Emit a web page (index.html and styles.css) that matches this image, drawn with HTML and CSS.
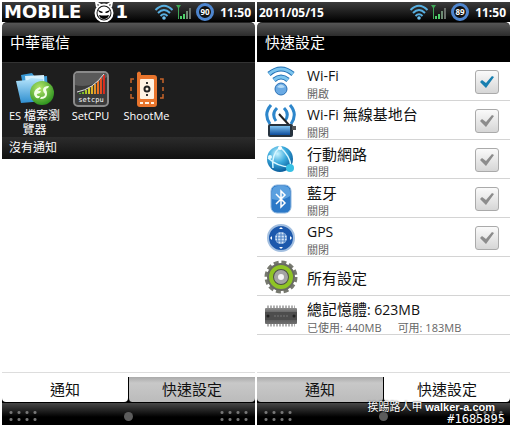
FILE: index.html
```
<!DOCTYPE html>
<html lang="zh-Hant">
<head>
    <meta charset="UTF-8">
    <meta name="viewport" content="width=device-width, initial-scale=1.0">
    <title>快速設定</title>
    <link rel="stylesheet" href="styles.css">
</head>
<body>
    <!-- Shared icons -->
    <svg class="defs" width="0" height="0" aria-hidden="true">
        <defs>
            <linearGradient id="blue" x1="0" y1="0" x2="0" y2="1">
                <stop offset="0" stop-color="#7fc3f0"/>
                <stop offset="1" stop-color="#0c4c9c"/>
            </linearGradient>
            <linearGradient id="folder" x1="0" y1="0" x2="0" y2="1">
                <stop offset="0" stop-color="#b5e4fb"/>
                <stop offset="1" stop-color="#2f8fd0"/>
            </linearGradient>
            <linearGradient id="bars" x1="0" y1="0" x2="1" y2="0">
                <stop offset="0" stop-color="#43b02a"/>
                <stop offset="0.4" stop-color="#d8d02a"/>
                <stop offset="0.75" stop-color="#ee6a22"/>
                <stop offset="1" stop-color="#d32020"/>
            </linearGradient>
            <linearGradient id="metal" x1="0" y1="0" x2="0" y2="1">
                <stop offset="0" stop-color="#8c8c8c"/>
                <stop offset="0.5" stop-color="#4a4a4a"/>
                <stop offset="1" stop-color="#707070"/>
            </linearGradient>
            <radialGradient id="ball" cx="0.4" cy="0.3" r="0.7">
                <stop offset="0" stop-color="#c9f4ff"/>
                <stop offset="0.5" stop-color="#39a9dc"/>
                <stop offset="1" stop-color="#0a5d9c"/>
            </radialGradient>
            <radialGradient id="leaf" cx="0.4" cy="0.3" r="0.7">
                <stop offset="0" stop-color="#b7e86c"/>
                <stop offset="1" stop-color="#2f9420"/>
            </radialGradient>
            <symbol id="wifi" viewBox="0 0 20 16">
                <g fill="none" stroke="#58b0e2" stroke-width="2">
                    <path d="M1.500 6Q10-2.500 18.500 6"/>
                    <path d="M4 9Q10 3 16 9"/>
                    <path d="M6.500 12Q10 8.500 13.500 12"/>
                </g>
                <circle cx="10" cy="14" r="1.800" fill="#6fc0ee"/>
            </symbol>
            <symbol id="signal" viewBox="0 0 16 16">
                <path d="M0 1h5L3 4v11H2V4z" fill="#3fa957"/>
                <path d="M4 12h2v3H4zM7 10h2v5H7z" fill="#4fd06a"/>
                <path d="M10 7h2v8h-2z" fill="#6d8a72"/>
                <path d="M13 4h2v11h-2z" fill="#6a706b"/>
            </symbol>
            <symbol id="check" viewBox="0 0 24 24">
                <path d="M5 12l2-2 4 3 6-7 2 1-8 11z"/>
            </symbol>
        </defs>
    </svg>

    <main class="screens">
        <section class="phone">
            <header class="status">
                <div class="logo">
                    <span>MOBILE</span>
                    <svg width="22" height="22" viewBox="0 0 22 22" aria-hidden="true">
                        <path d="M4 6L3 1l5 3M14 4l5-3-1 5" fill="#111" stroke="#fff" stroke-width="2"/>
                        <circle cx="11" cy="12" r="8.500" fill="#111" stroke="#fff" stroke-width="2"/>
                        <circle cx="11" cy="12" r="6.500" fill="#fff"/>
                        <path d="M5 9l5 2-1 1q-3 0-4-3zM17 9l-5 2 1 1q3 0 4-3zM6 14q5 1 10 0-1 4-5 4t-5-4z" fill="#000"/>
                    </svg>
                    <span>1</span>
                </div>
                <svg class="wifi" aria-hidden="true"><use href="#wifi"/></svg>
                <svg class="signal" aria-hidden="true"><use href="#signal"/></svg>
                <span class="battery">90</span>
                <time>11:50</time>
            </header>
            <h1>中華電信</h1>
            <div class="apps">
                <button class="app" type="button">
                    <svg width="40" height="36" viewBox="0 0 40 36" aria-hidden="true">
                        <path d="M6 4l11-2 3 4 12-1 1 22-22 4z" fill="#3a9ad6"/>
                        <path d="M10 5l19-1 1 18-18 3z" fill="#d6f0fc"/>
                        <path d="M1 10l12-1 3-2 12 1 2 22-24 2z" fill="url(#folder)"/>
                        <circle cx="27" cy="22" r="12" fill="url(#leaf)"/>
                        <path d="M25 16q-6 2-6 7 1 5 5 4l1-2q-4 0-3-2l3-1 1-2-3 0q1-2 3-2zM34 15q-6 0-6 4 0 2 2 4 0 3-4 3l-1 2q7 0 7-5 0-3-1-4 0-2 2-2z" fill="#f2ffe6"/>
                    </svg>
                    <span>ES <b>檔案瀏覽器</b></span>
                </button>
                <button class="app" type="button">
                    <svg width="36" height="36" viewBox="0 0 36 36" aria-hidden="true">
                        <rect x="1" y="1" width="34" height="34" rx="4" fill="#3b3b3b" stroke="#8a8a8a" stroke-width="2"/>
                        <path d="M2 14q14 4 32-8v-2l-3-2H4l-2 2z" fill="#5a5a5a"/>
                        <path d="M6 23v-1h2v1zM9 23v-2h2v2zM12 23v-4h2v4zM15 23v-6h2v6zM18 23v-8h2v8zM21 23V13h2v10zM24 23V10h2v13zM27 23V7h2v16zM30 23V4h2v19z" fill="url(#bars)"/>
                        <path d="M4 21Q20 18 31 3" fill="none" stroke="#ddd"/>
                        <text x="18" y="31" text-anchor="middle" font-family="DejaVu Sans Mono" font-size="7" fill="#fff">setcpu</text>
                    </svg>
                    <span>SetCPU</span>
                </button>
                <button class="app" type="button">
                    <svg width="36" height="36" viewBox="0 0 36 36" aria-hidden="true">
                        <path d="M8 2q2-3 4 0v2h13q3 0 3 3v26q0 3-3 3H11q-3 0-3-3z" fill="#e8742c"/>
                        <rect x="11" y="8" width="14" height="20" rx="1" fill="#fff3e4"/>
                        <circle cx="18" cy="18" r="2.500" fill="none" stroke="#222" stroke-width="2"/>
                        <path d="M18 11v2M18 23v2" stroke="#333" stroke-width="2"/>
                        <path d="M11 31h3v2h-3zM16 31h4v2h-4zM22 31h3v2h-3z" fill="#fff3e4"/>
                        <path d="M5 8H2v4M2 16v4M2 23v4h3M31 8h3v4M34 16v4M34 23v4h-3" fill="none" stroke="#c8642a" stroke-width="1.500"/>
                    </svg>
                    <span>ShootMe</span>
                </button>
            </div>
            <p class="no-notice">沒有通知</p>
            <div class="content"></div>
            <nav class="tabs">
                <button class="tab active" type="button">通知</button>
                <button class="tab" type="button">快速設定</button>
            </nav>
            <footer class="handle">
                <i class="dots"></i>
                <i class="knob"></i>
                <i class="dots"></i>
            </footer>
        </section>

        <section class="phone">
            <header class="status">
                <time class="date">2011/05/15</time>
                <svg class="wifi" aria-hidden="true"><use href="#wifi"/></svg>
                <svg class="signal" aria-hidden="true"><use href="#signal"/></svg>
                <span class="battery">89</span>
                <time>11:50</time>
            </header>
            <h1>快速設定</h1>
            <div class="content">
                <label class="row">
                    <svg width="32" height="32" viewBox="0 0 32 32" aria-hidden="true">
                        <g fill="none" stroke="#1f6fb4" stroke-width="5">
                            <path d="M4 8Q16-2 28 8"/>
                            <path d="M9 14q7-6 14 0"/>
                        </g>
                        <g fill="none" stroke="#7cc4ee" stroke-width="3">
                            <path d="M4 8Q16-2 28 8"/>
                            <path d="M9 14q7-6 14 0"/>
                        </g>
                        <circle cx="16" cy="23" r="6" fill="#6aaae4" stroke="#2a70b5"/>
                        <path d="M12 21q4-5 8 0-4 2-8 0z" fill="#b4daf6"/>
                    </svg>
                    <span class="text">
                        <span class="name"><span class="latin">Wi-Fi</span></span>
                        <small>開啟</small>
                    </span>
                    <span class="check">
                        <input type="checkbox" checked>
                        <svg aria-hidden="true"><use href="#check"/></svg>
                    </span>
                </label>
                <label class="row">
                    <svg width="32" height="34" viewBox="0 0 32 34" aria-hidden="true">
                        <g fill="none" stroke="#2d86cb" stroke-width="3">
                            <path d="M6 1Q-2 10 5 20M12 4Q6 10 11 17M25 1q8 9 1 19M19 4q6 6 1 13"/>
                        </g>
                        <path d="M14 10l10 11" stroke="#222" stroke-width="2"/>
                        <rect x="3" y="20" width="25" height="13" rx="2" fill="#26333f"/>
                        <rect x="5" y="22" width="20" height="9" fill="url(#blue)"/>
                        <path d="M27 22h4v4h-4z" fill="#555"/>
                    </svg>
                    <span class="text">
                        <span class="name"><span class="latin">Wi-Fi</span> 無線基地台</span>
                        <small>關閉</small>
                    </span>
                    <span class="check">
                        <input type="checkbox">
                        <svg aria-hidden="true"><use href="#check"/></svg>
                    </span>
                </label>
                <label class="row">
                    <svg width="32" height="32" viewBox="0 0 32 32" aria-hidden="true">
                        <circle cx="15" cy="15" r="13" fill="url(#ball)"/>
                        <path d="M3 14q10 9 22 9M15 3q-9 8-7 21M15 3q10 9 11 19" fill="none" stroke="#d8f6ff" stroke-width="1.500"/>
                        <circle cx="15" cy="4" r="2" fill="#fff"/>
                        <circle cx="5" cy="13" r="2" fill="#e8fbff"/>
                        <circle cx="25" cy="24" r="4" fill="#37c0e4"/>
                    </svg>
                    <span class="text">
                        <span class="name">行動網路</span>
                        <small>關閉</small>
                    </span>
                    <span class="check">
                        <input type="checkbox">
                        <svg aria-hidden="true"><use href="#check"/></svg>
                    </span>
                </label>
                <label class="row">
                    <svg width="32" height="32" viewBox="0 0 32 32" aria-hidden="true">
                        <rect x="6" y="2" width="20" height="28" rx="6" fill="#2c79c8" stroke="#8cb6df"/>
                        <path d="M7 9q0-6 6-6h6q6 0 6 6v4q-9 6-18 3z" fill="#5ba0df"/>
                        <path d="M11 11l9 9-4 4V8l4 4-9 9" fill="none" stroke="#fff" stroke-width="1.500"/>
                    </svg>
                    <span class="text">
                        <span class="name">藍牙</span>
                        <small>關閉</small>
                    </span>
                    <span class="check">
                        <input type="checkbox">
                        <svg aria-hidden="true"><use href="#check"/></svg>
                    </span>
                </label>
                <label class="row">
                    <svg width="32" height="32" viewBox="0 0 32 32" aria-hidden="true">
                        <circle cx="16" cy="16" r="13" fill="#1c58ac" stroke="#a3bfe0" stroke-width="2"/>
                        <circle cx="16" cy="16" r="6" fill="#d4e5f7"/>
                        <path d="M10 16h12M16 10v12M11 13h10M11 19h10M13 11q-1 5 0 10M19 11q1 5 0 10" fill="none" stroke="#4a80c5"/>
                        <path d="M16 5l2 2h-4zM16 27l2-2h-4zM5 16l2-2v4zM27 16l-2-2v4z" fill="#fff"/>
                    </svg>
                    <span class="text">
                        <span class="name"><span class="latin">GPS</span></span>
                        <small>關閉</small>
                    </span>
                    <span class="check">
                        <input type="checkbox">
                        <svg aria-hidden="true"><use href="#check"/></svg>
                    </span>
                </label>
                <button class="row" type="button">
                    <svg width="34" height="34" viewBox="0 0 34 34" aria-hidden="true">
                        <circle cx="17" cy="17" r="15" fill="none" stroke="#77796f" stroke-width="3" stroke-dasharray="5 2.850"/>
                        <circle cx="17" cy="17" r="14" fill="#686a62"/>
                        <circle cx="17" cy="17" r="10" fill="#4c4f48" stroke="#8fc425" stroke-width="4"/>
                        <circle cx="17" cy="17" r="5" fill="#f6f6f6" stroke="#a4a4a4" stroke-width="4"/>
                    </svg>
                    <span class="text">
                        <span class="name">所有設定</span>
                    </span>
                </button>
                <div class="row">
                    <svg width="34" height="24" viewBox="0 0 34 24" aria-hidden="true">
                        <path d="M3 3h28M3 21h28" stroke="#b0b0b0" stroke-width="3" stroke-dasharray="2 1"/>
                        <rect x="1" y="4" width="32" height="16" rx="1" fill="url(#metal)"/>
                        <path d="M1 8h32v8H1z" fill="#4d4d4d"/>
                        <circle cx="4" cy="12" r="1.500" fill="#222"/>
                        <circle cx="30" cy="12" r="1.500" fill="#222"/>
                        <path d="M10 12h14" stroke="#777" stroke-dasharray="2 1"/>
                    </svg>
                    <span class="text">
                        <span class="name">總記憶體<span class="latin">: 623MB</span></span>
                        <small><span>已使用: 440MB</span><span>可用: 183MB</span></small>
                    </span>
                </div>
            </div>
            <nav class="tabs">
                <button class="tab" type="button">通知</button>
                <button class="tab active" type="button">快速設定</button>
            </nav>
            <footer class="handle">
                <i class="dots"></i>
                <i class="knob"></i>
                <i class="dots"></i>
            </footer>
            <div class="watermark">
                <p>挨踢路人甲 <b>walker-a.com</b></p>
                <p class="number">#1685895</p>
            </div>
        </section>
    </main>
</body>
</html>
```
FILE: styles.css
```
* {
    margin: 0;
    padding: 0;
    box-sizing: border-box;
}

body {
    font-family: 'Open Sans', 'Noto Sans CJK TC', sans-serif;
    background: #fff;
    color: #111;
}

button {
    font: inherit;
    color: inherit;
    background: none;
    border: none;
    cursor: pointer;
}

.defs {
    position: absolute;
}

.screens {
    display: flex;
    gap: 2px;
    padding: 2px;
    min-height: 100vh;
}

.phone {
    position: relative;
    flex: 1;
    min-width: 0;
    display: flex;
    flex-direction: column;
}

/* Status bar */
.status {
    display: flex;
    align-items: center;
    height: 20px;
    padding: 0 4px 0 2px;
    background: linear-gradient(#3c3c3c, #000);
    color: #fff;
    font-size: 12px;
    font-weight: bold;
}

.logo,
.date {
    margin-right: auto;
}

.logo {
    display: flex;
    align-items: center;
    font-family: 'DejaVu Sans', sans-serif;
    font-size: 18px;
    line-height: 20px;
}

.logo svg {
    margin-left: 12px;
}

.wifi {
    width: 20px;
    height: 16px;
    margin-right: 2px;
}

.signal {
    width: 16px;
    height: 16px;
    margin-right: 4px;
}

.battery {
    width: 18px;
    height: 18px;
    margin-right: 6px;
    border: 3px solid #4e86cf;
    border-radius: 50%;
    background: #111;
    font-size: 8px;
    line-height: 12px;
    text-align: center;
}

h1 {
    height: 40px;
    padding: 4px 8px 0;
    border-top: 1px solid #222;
    border-radius: 5px 5px 0 0;
    background: linear-gradient(#555, #2c2c2c 13px, #000 13px);
    color: #fff;
    font-size: 15px;
    font-weight: normal;
    line-height: 30px;
}

/* Running apps */
.apps {
    display: flex;
    gap: 3px;
    padding: 8px 6px 0;
    height: 75px;
    background: #1e1e1e;
    border-top: 1px solid #333;
}

.app {
    width: 53px;
    display: flex;
    flex-direction: column;
    align-items: center;
    gap: 2px;
    color: #fff;
    font-size: 11px;
    line-height: 14px;
}

.app svg {
    flex: none;
}

.app b {
    font-size: 12px;
    font-weight: normal;
}

.no-notice {
    padding: 0 7px;
    background: linear-gradient(#2c2c2c, #111);
    color: #fff;
    font-size: 12px;
    line-height: 22px;
}

/* Settings list */
.content {
    flex: 1;
    margin-bottom: 4px;
    border-bottom: 1px solid #ddd;
}

.row {
    display: flex;
    align-items: center;
    width: 100%;
    height: 39px;
    padding: 2px 11px 0 7px;
    border-bottom: 1px solid #d4d4d4;
    text-align: left;
}

.row > svg {
    flex: none;
    width: 34px;
}

.text {
    flex: 1;
    margin-left: 9px;
    padding-top: 2px;
}

.name {
    display: block;
    font-size: 15px;
    line-height: 20px;
}

.latin {
    font-size: 14px;
}

.row small {
    display: flex;
    gap: 16px;
    color: #666;
    font-size: 11px;
    line-height: 15px;
}

.check {
    display: grid;
    width: 24px;
    height: 24px;
}

.check input,
.check svg {
    grid-area: 1 / 1;
    width: 24px;
    height: 24px;
}

.check input {
    appearance: none;
    border: 1px solid #aaa;
    border-radius: 3px;
    background: linear-gradient(#fafafa, #d6d6d6);
}

.check svg {
    fill: #8c8c8c;
    pointer-events: none;
}

.check input:checked + svg {
    fill: #187fb0;
}

/* Tabs */
.tabs {
    display: flex;
    background: #000;
}

.tab {
    flex: 1;
    height: 25px;
    border-radius: 0 0 4px 4px;
    background: linear-gradient(#aaa, #c8c8c8 6px, #bbb);
    font-size: 15px;
    line-height: 25px;
}

.tab.active {
    background: #fff;
}

.tab + .tab {
    border-left: 1px solid #000;
}

.handle {
    display: flex;
    align-items: center;
    justify-content: space-between;
    height: 23px;
    padding: 4px 5px 0;
    background: linear-gradient(#484848, #000 14px);
    border-top: 1px solid #000;
}

.dots {
    width: 32px;
    height: 14px;
    background: radial-gradient(circle, #777 1px, transparent 2px) 0 0 / 8px 7px;
}

.knob {
    width: 9px;
    height: 9px;
    border-radius: 50%;
    background: #5c5c5c;
}

.watermark {
    position: absolute;
    right: 5px;
    bottom: 0;
    color: #fff;
    font-size: 11px;
    line-height: 12px;
    text-align: right;
    text-shadow: 0 0 2px #000;
}

.watermark p:first-child {
    padding-right: 10px;
}

.watermark b {
    font-family: 'Liberation Sans', sans-serif;
}

.number {
    font-family: 'DejaVu Sans Mono', monospace;
    font-size: 12px;
}
```
